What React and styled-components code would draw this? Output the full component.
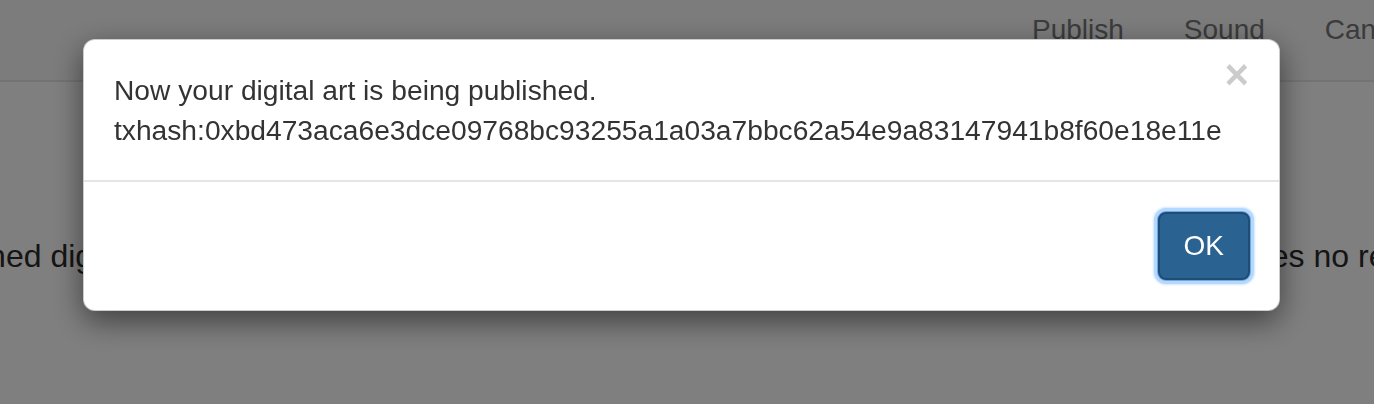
import React from "react";
import styled, { createGlobalStyle } from "styled-components";

const Global = createGlobalStyle`
  html, body { margin: 0; padding: 0; }
  body {
    width: 1374px;
    height: 404px;
    overflow: hidden;
    background: #ffffff;
    font-family: "Liberation Sans", Arial, Helvetica, sans-serif;
    color: #333333;
  }
`;

const Page = styled.div`
  width: 1374px;
  height: 404px;
  overflow: hidden;
  background: #ffffff;
`;

const Navbar = styled.nav`
  display: grid;
  grid-template-columns: 1002px 1fr;
  height: 80px;
  background: #f8f8f8;
  border-bottom: 2px solid #e7e7e7;
  overflow: hidden;
`;

const Brand = styled.div``;

const NavList = styled.ul`
  display: flex;
  margin: 0;
  padding: 0;
  list-style: none;
  white-space: nowrap;
`;

const NavItem = styled.li`
  padding: 10px 30px 0;
  font-size: 28px;
  line-height: 40px;
  color: #777777;
`;

const Content = styled.div`
  display: grid;
  grid-template-columns: 134px 1fr 185px;
  margin-top: 151px;
  font-size: 32px;
  line-height: 46px;
  color: #2a2a2a;
  white-space: nowrap;
`;

const LeftText = styled.div`
  display: flex;
  justify-content: flex-end;
  overflow: hidden;
`;

const RightText = styled.div`
  overflow: hidden;
`;

const Backdrop = styled.div`
  position: fixed;
  inset: 0;
  background: rgba(0, 0, 0, 0.5);
  display: flex;
  align-items: flex-start;
  padding: 39px 0 0 83px;
`;

const Modal = styled.div`
  width: 1197px;
  box-sizing: border-box;
  background: #ffffff;
  border: 1px solid rgba(0, 0, 0, 0.2);
  border-radius: 12px;
  box-shadow: 0 10px 30px rgba(0, 0, 0, 0.5);
`;

const Body = styled.div`
  display: flex;
  align-items: flex-start;
  padding: 30px;
`;

const Message = styled.div`
  flex: 1;
  font-size: 28.2px;
  line-height: 40px;
  color: #333333;
`;

const Close = styled.button`
  margin-top: -16px;
  padding: 0;
  border: 0;
  background: transparent;
  font-family: "Liberation Sans", Arial, sans-serif;
  font-size: 42px;
  font-weight: bold;
  line-height: 1;
  color: #000000;
  opacity: 0.2;
  cursor: pointer;
`;

const Footer = styled.div`
  display: flex;
  justify-content: flex-end;
  padding: 30px 29px 30px 30px;
  border-top: 2px solid #e5e5e5;
`;

const Button = styled.button`
  font-family: "Liberation Sans", Arial, sans-serif;
  font-size: 28px;
  line-height: 40px;
  padding: 12px 24px;
  color: #ffffff;
  background: #2a6292;
  border: 2px solid #204d74;
  border-radius: 8px;
  box-shadow: 0 0 0 1px #6aa8ee, 0 0 0 4px #b6d8fb, 0 0 2px 5px rgba(182, 216, 251, 0.6);
  outline: none;
`;

export default function App() {
  return (
    <>
      <Global />
      <Page>
        <Navbar>
          <Brand />
          <NavList>
            <NavItem>Publish</NavItem>
            <NavItem>Sound</NavItem>
            <NavItem>Canvas</NavItem>
          </NavList>
        </Navbar>
        <Content>
          <LeftText>Once signed digital</LeftText>
          <div />
          <RightText>requires no registration.</RightText>
        </Content>
      </Page>
      <Backdrop>
        <Modal>
          <Body>
            <Message>
              Now your digital art is being published.
              <br />
              txhash:0xbd473aca6e3dce09768bc93255a1a03a7bbc62a54e9a83147941b8f60e18e11e
            </Message>
            <Close aria-label="Close">×</Close>
          </Body>
          <Footer>
            <Button autoFocus>OK</Button>
          </Footer>
        </Modal>
      </Backdrop>
    </>
  );
}
